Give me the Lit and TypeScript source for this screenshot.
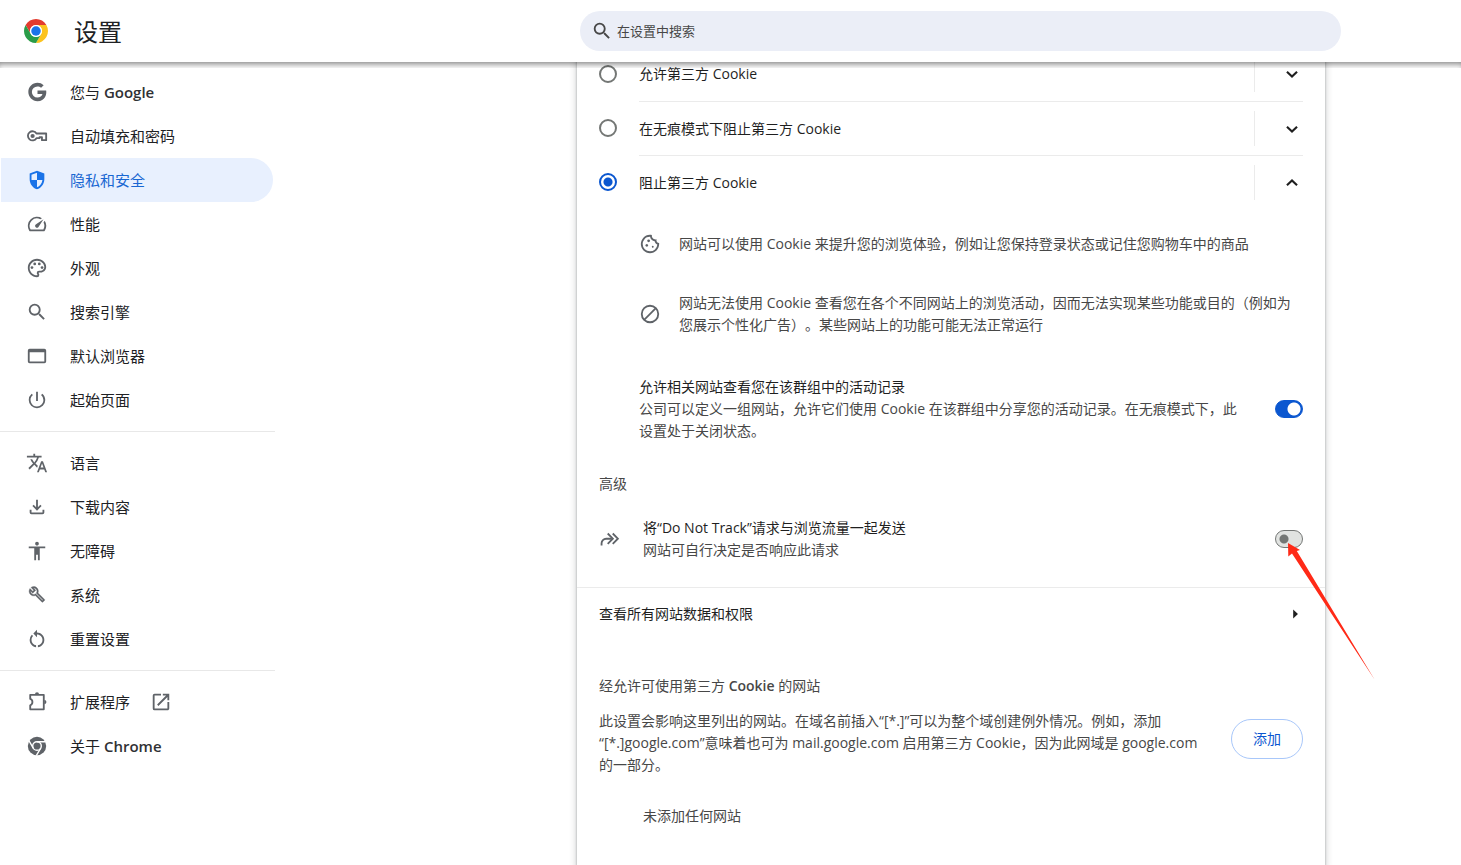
import { LitElement, html, css, svg, nothing } from "lit";
import { customElement, property } from "lit/decorators.js";
import { unsafeSVG } from "lit/directives/unsafe-svg.js";

const ICONS: Record<string, string> = {
  google: `<path d="M12.545 10.239v3.821h5.445c-.712 2.315-2.647 3.972-5.445 3.972a6.033 6.033 0 1 1 0-12.064c1.498 0 2.866.549 3.921 1.453l2.814-2.814A9.969 9.969 0 0 0 12.545 2C7.021 2 2.543 6.477 2.543 12s4.478 10 10.002 10c8.396 0 10.249-7.85 9.426-11.748z"/>`,
  key: `<g fill="none" stroke="currentColor" stroke-width="2"><path d="M11.400 9.300H22V16.500h-4.600V13.200h-2.600v1.200h-3.400A5 5 0 1 1 11.400 9.300z" stroke-linejoin="round"/></g><circle cx="7.200" cy="12" r="2.300"/>`,
  shield: `<path fill-rule="evenodd" d="M12 2 4 5v6.100C4 16.150 7.410 20.850 12 22c4.590-1.150 8-5.850 8-10.900V5l-8-3zM6 6.400l6-2.260V12H6.060A9 9 0 0 1 6 11.100V6.400zM12 12h5.940c-.46 3.600-2.840 6.870-5.940 7.920V12z"/>`,
  speed: `<path d="m20.380 8.570-1.230 1.850a8 8 0 0 1-.22 7.580H5.070A8 8 0 0 1 15.580 6.850l1.850-1.230A10 10 0 0 0 3.350 19a2 2 0 0 0 1.720 1h13.850a2 2 0 0 0 1.740-1 10 10 0 0 0-.27-10.440zm-9.790 6.840a2 2 0 0 0 2.830 0l5.660-8.490-8.490 5.660a2 2 0 0 0 0 2.830z"/>`,
  palette: `<path d="M12 22C6.490 22 2 17.510 2 12S6.490 2 12 2s10 4.040 10 9c0 3.310-2.690 6-6 6h-1.770c-.28 0-.5.22-.5.5 0 .12.05.23.13.33.41.47.64 1.060.64 1.670A2.500 2.500 0 0 1 12 22zm0-18c-4.410 0-8 3.590-8 8s3.590 8 8 8c.28 0 .5-.22.5-.5a.54.54 0 0 0-.14-.35c-.41-.46-.63-1.050-.63-1.650a2.500 2.500 0 0 1 2.500-2.500H16c2.210 0 4-1.790 4-4 0-3.860-3.590-7-8-7z"/><circle cx="6.500" cy="11.500" r="1.500"/><circle cx="9.500" cy="7.500" r="1.500"/><circle cx="14.500" cy="7.500" r="1.500"/><circle cx="17.500" cy="11.500" r="1.500"/>`,
  search: `<path d="M15.500 14h-.79l-.28-.27A6.471 6.471 0 0 0 16 9.500 6.500 6.500 0 1 0 9.500 16c1.610 0 3.090-.59 4.230-1.570l.27.28v.79l5 4.990L20.490 19l-4.990-5zm-6 0C7.010 14 5 11.990 5 9.500S7.010 5 9.500 5 14 7.010 14 9.500 11.990 14 9.500 14z"/>`,
  browser: `<path d="M20 4H4a2 2 0 0 0-2 2v12a2 2 0 0 0 2 2h16a2 2 0 0 0 2-2V6a2 2 0 0 0-2-2zm0 14H4V8h16v10z"/>`,
  power: `<path d="M13 3h-2v10h2V3zm4.830 2.170-1.420 1.420A6.920 6.920 0 0 1 19 12c0 3.870-3.130 7-7 7A6.995 6.995 0 0 1 7.580 6.580L6.170 5.170A8.932 8.932 0 0 0 3 12a9 9 0 0 0 18 0c0-2.740-1.230-5.180-3.170-6.830z"/>`,
  translate: `<path d="m12.870 15.070-2.540-2.510.03-.03A17.520 17.520 0 0 0 14.070 6H17V4h-7V2H8v2H1v1.990h11.170C11.500 7.920 10.440 9.750 9 11.350 8.070 10.320 7.300 9.190 6.690 8h-2c.73 1.630 1.730 3.170 2.980 4.560l-5.090 5.020L4 19l5-5 3.110 3.110.76-2.040zM18.500 10h-2L12 22h2l1.120-3h4.750L21 22h2l-4.500-12zm-2.620 7 1.620-4.330L19.120 17h-3.240z"/>`,
  download: `<path d="m12 16-5-5 1.400-1.450 2.600 2.600V4h2v8.150l2.600-2.600L17 11l-5 5zm-6 4a2 2 0 0 1-2-2v-3h2v3h12v-3h2v3a2 2 0 0 1-2 2H6z"/>`,
  accessibility: `<path d="M12 2c1.100 0 2 .9 2 2s-.9 2-2 2-2-.9-2-2 .9-2 2-2zm9 7h-6v13h-2v-6h-2v6H9V9H3V7h18v2z"/>`,
  wrench: `<g transform="translate(2.600 2) scale(.78)" stroke="currentColor" stroke-width=".5"><path d="m22.610 18.990-9.080-9.080c.93-2.340.45-5.100-1.440-7C9.790.61 6.210.4 3.660 2.260L7.500 6.110 6.080 7.520 2.250 3.690C.39 6.230.6 9.820 2.900 12.110c1.860 1.860 4.570 2.350 6.890 1.480l9.110 9.110c.39.39 1.020.39 1.410 0l2.300-2.300c.4-.38.4-1.010 0-1.410zm-3 1.600-9.460-9.460c-.61.45-1.290.72-2 .82-1.360.2-2.790-.21-3.830-1.250C3.370 9.760 2.930 8.500 3 7.260l3.090 3.090 4.240-4.240-3.090-3.090c1.240-.07 2.490.37 3.440 1.310 1.080 1.080 1.490 2.570 1.240 3.960-.12.71-.42 1.370-.88 1.960l9.450 9.450-.88.89z"/></g>`,
  reset: `<path d="M12 5V2L8 6l4 4V7c3.310 0 6 2.690 6 6 0 2.970-2.170 5.430-5 5.910v2.020c3.950-.49 7-3.850 7-7.930 0-4.420-3.580-8-8-8z"/><path d="M6 13c0-1.650.67-3.150 1.760-4.240L6.340 7.340A8.014 8.014 0 0 0 4 13c0 4.080 3.050 7.440 7 7.930v-2.020c-2.830-.48-5-2.940-5-5.910z"/>`,
  extension: `<path d="M4.600 4.200H19.400V20H4.600V15.600C7.800 14.600 7.800 9.600 4.600 8.700z" fill="none" stroke="currentColor" stroke-width="2" stroke-linejoin="round"/><path d="M9.800 3.600a2.200 2.200 0 0 1 4.400 0zM20 9.800a2.300 2.300 0 0 1 0 4.600z"/>`,
  open: `<path d="M19 19H5V5h7V3H5a2 2 0 0 0-2 2v14a2 2 0 0 0 2 2h14c1.100 0 2-.9 2-2v-7h-2v7zM14 3v2h3.590l-9.830 9.830 1.410 1.410L19 6.410V10h2V3h-7z"/>`,
  chrome: `<circle cx="12" cy="12" r="10"/><g fill="none" stroke="#fff" stroke-width="1.500"><circle cx="12" cy="12" r="4.700"/><path d="M12 7.300H21.500M16.100 14.300 11.200 22.600M7.900 14.300 3.200 6.200"/></g>`,
  cookie: `<g transform="translate(0 24) scale(.025)"><path d="M480-80q-83 0-156-31.500T197-197q-54-54-85.500-127T80-480q0-75 29-147t81-128.500q52-56.500 125-91T475-881q21 0 43 2t45 7q-9 45 6 85t45 66.500q30 26.500 71.500 36.500t85.500-5q-26 59 7.500 113t99.500 56q1 11 1.500 20.500t.5 20.500q0 82-31.500 154.500t-85.500 127q-54 54.500-127 86T480-80Zm-60-480q25 0 42.500-17.500T480-620q0-25-17.500-42.500T420-680q-25 0-42.500 17.500T360-620q0 25 17.500 42.500T420-560Zm-80 200q25 0 42.500-17.500T400-420q0-25-17.500-42.500T340-480q-25 0-42.500 17.500T280-420q0 25 17.500 42.500T340-360Zm260 40q17 0 28.500-11.500T640-360q0-17-11.500-28.500T600-400q-17 0-28.500 11.500T560-360q0 17 11.500 28.500T600-320ZM480-160q122 0 216.500-84T800-458q-50-22-78.500-60T683-603q-77-11-132-66t-68-132q-80-2-140.500 29t-101 79.500Q201-644 180.500-587T160-480q0 133 93.500 226.500T480-160Z"/></g>`,
  block: `<g fill="none" stroke="currentColor" stroke-width="2"><circle cx="12" cy="12" r="9"/><path d="M5.600 18.400 18.400 5.600"/></g>`,
  redirect: `<g fill="none" stroke="currentColor" stroke-width="2"><path d="M2.800 19v-2.300a5 5 0 0 1 5-5H14"/><path d="m9.500 6 5.600 5.700-5.600 5.700M15 6l5.600 5.700-5.600 5.700"/></g>`,
  down: `<path d="m6.500 9.500 5.500 5.300 5.500-5.300" fill="none" stroke="currentColor" stroke-width="2.300"/>`,
  up: `<path d="M6.500 14.500 12 9.200l5.500 5.300" fill="none" stroke="currentColor" stroke-width="2.300"/>`,
  right: `<path d="m10 7 5.200 5-5.200 5z"/>`,
};

@customElement("s-icon")
class SIcon extends LitElement {
  @property() name = "";

  static styles = css`
    :host { display: block; flex: none; width: 22px; height: 22px; }
    .glyph { display: block; width: 100%; height: 100%; fill: currentColor; }
  `;

  render() {
    return html`<svg class="glyph" viewBox="0 0 24 24" aria-hidden="true">${unsafeSVG(ICONS[this.name] ?? "")}</svg>`;
  }
}

const sector = (color: string, turn: number) => svg`
  <path fill=${color} transform=${`rotate(${turn})`}
    d="M-10.392-6A12 12 0 0 1 10.392-6H0A6 6 0 0 0-5.196 3z"></path>`;

@customElement("s-header")
class SHeader extends LitElement {
  static styles = css`
    :host { display: block; position: relative; z-index: 2; background: #fff; }
    .bar {
      display: grid;
      grid-template-columns: 275px minmax(0, 305fr) minmax(0, 761px) minmax(0, 120fr);
      align-items: center;
      height: 62px;
    }
    .brand { display: flex; align-items: center; gap: 26px; padding-left: 24px; }
    .logo { display: block; width: 24px; height: 24px; }
    .title { margin: 0; padding-top: 2px; font-size: 24px; line-height: 32px; font-weight: 400; color: #202124; }
    .search {
      grid-column: 3; display: flex; align-items: center; gap: 4px;
      height: 40px; padding: 0 22px 0 11px; box-sizing: border-box;
      border-radius: 20px; background: #ebeef7; color: #474747;
    }
    .field {
      flex: 1; min-width: 0; border: 0; padding: 0; outline: 0; background: none;
      font: inherit; font-size: 13px; line-height: 20px; color: #1f1f1f;
    }
    .field::placeholder { color: #474747; opacity: 1; }
    .shade {
      position: absolute; left: 0; right: 0; top: 100%; height: 6px;
      box-shadow: inset 0 5px 6px -3px rgba(0, 0, 0, 0.5); pointer-events: none;
    }
  `;

  render() {
    return html`
      <header class="bar">
        <div class="brand">
          <svg class="logo" viewBox="-12 -12 24 24" aria-hidden="true">
            ${sector("#e33b2e", 0)}${sector("#fcc31e", 120)}${sector("#2a9c48", 240)}
            <circle r="6" fill="#fff"></circle>
            <circle r="4.75" fill="#1a73e8"></circle>
          </svg>
          <h1 class="title">设置</h1>
        </div>
        <label class="search">
          <s-icon name="search"></s-icon>
          <input class="field" type="text" placeholder="在设置中搜索" aria-label="在设置中搜索" />
        </label>
      </header>
      <div class="shade"></div>
    `;
  }
}

interface NavItem { icon: string; text: string; latin?: string; selected?: boolean; external?: boolean }

const NAV: NavItem[][] = [
  [
    { icon: "google", text: "您与", latin: "Google" },
    { icon: "key", text: "自动填充和密码" },
    { icon: "shield", text: "隐私和安全", selected: true },
    { icon: "speed", text: "性能" },
    { icon: "palette", text: "外观" },
    { icon: "search", text: "搜索引擎" },
    { icon: "browser", text: "默认浏览器" },
    { icon: "power", text: "起始页面" },
  ],
  [
    { icon: "translate", text: "语言" },
    { icon: "download", text: "下载内容" },
    { icon: "accessibility", text: "无障碍" },
    { icon: "wrench", text: "系统" },
    { icon: "reset", text: "重置设置" },
  ],
  [
    { icon: "extension", text: "扩展程序", external: true },
    { icon: "chrome", text: "关于", latin: "Chrome" },
  ],
];

@customElement("s-nav")
class SNav extends LitElement {
  static styles = css`
    :host { display: block; padding-top: 8px; }
    .group + .group { border-top: 1px solid #e8e8e8; margin-top: 9px; padding-top: 9px; }
    .item {
      display: flex; align-items: center; gap: 22px; height: 44px;
      margin: 0 2px 0 1px; padding: 0 25px; box-sizing: border-box;
      border-radius: 0 22px 22px 0;
      font-size: 15px; line-height: 22px; color: #202124; text-decoration: none;
    }
    .selected { background: #e8f0fe; color: #1967d2; }
    .icon { color: #5f6368; }
    .selected .icon { color: #1a73e8; }
    .latin { font-weight: 600; color: #303134; }
    .external { margin-left: -2px; color: #5f6368; }
  `;

  render() {
    return html`<nav>
      ${NAV.map((group) => html`<div class="group">
        ${group.map((item) => html`
          <a class="item ${item.selected ? "selected" : ""}" href="#">
            <s-icon class="icon" name=${item.icon}></s-icon>
            <span>${item.text}${item.latin ? html` <span class="latin">${item.latin}</span>` : nothing}</span>
            ${item.external ? html`<s-icon class="external" name="open"></s-icon>` : nothing}
          </a>`)}
      </div>`)}
    </nav>`;
  }
}

const CHOICES = [
  { id: "allow", text: "允许第三方 Cookie", open: false },
  { id: "incognito", text: "在无痕模式下阻止第三方 Cookie", open: false },
  { id: "block", text: "阻止第三方 Cookie", open: true },
];

@customElement("s-cookies")
class SCookies extends LitElement {
  static styles = css`
    :host {
      display: block; position: relative; margin-top: -15px; padding-bottom: 36px; background: #fff;
      box-shadow: 0 1px 2px rgba(60, 64, 67, 0.4), 0 2px 6px 2px rgba(60, 64, 67, 0.18);
      font-size: 14px; line-height: 22px; color: #1f1f1f;
    }
    .choices { margin: 0; padding: 0 22px; border: 0; min-width: 0; }
    .choice { display: flex; align-items: center; gap: 22px; }
    .radio {
      appearance: none; flex: none; width: 18px; height: 18px; margin: 0; box-sizing: border-box;
      border: 2px solid #747775; border-radius: 50%; background: #fff;
    }
    .radio:checked { border-color: #0b57d0; background: radial-gradient(circle, #0b57d0 4px, #fff 5px); }
    .choice-body { flex: 1; display: flex; align-items: center; height: 54px; box-sizing: border-box; }
    .choice + .choice .choice-body { border-top: 1px solid #ebebeb; }
    .choice-text { flex: 1; }
    .expand {
      display: flex; align-items: center; justify-content: flex-end;
      width: 49px; height: 35px; padding: 0; border: 0; border-left: 1px solid #ebebeb;
      background: none; color: #1f1f1f;
    }
    .details { display: flex; flex-direction: column; gap: 37px; padding: 24px 22px 40px 62px; }
    .detail { display: flex; align-items: center; gap: 18px; color: #474747; }
    .text { text-spacing-trim: space-all; margin: 0; color: #474747; }
    .row { display: flex; align-items: center; gap: 22px; padding: 0 22px; }
    .related { padding-left: 62px; }
    .grow { flex: 1; min-width: 0; }
    .label { display: block; }
    .icon { color: #5f6368; }
    .switch {
      appearance: none; display: block; width: 28px; height: 18px; margin: 0; box-sizing: border-box;
      border: 1px solid #747775; border-radius: 9px;
      background: radial-gradient(circle at 8px 50%, #747775 4px, #e1e3e1 5px);
    }
    .switch:checked { border-color: #0b57d0; background: radial-gradient(circle at 18px 50%, #fff 6px, #0b57d0 7px); }
    .switch-box { position: relative; flex: none; }
    .pointer { position: absolute; left: 11px; top: 12px; z-index: 1; width: 90px; height: 140px; pointer-events: none; }
    .heading { margin: 0; padding: 31px 22px 22px; font-size: 14px; font-weight: 400; color: #474747; }
    .track { padding-bottom: 26px; border-bottom: 1px solid #ebebeb; }
    .link { justify-content: space-between; height: 52px; color: inherit; text-decoration: none; }
    .chevron { margin-right: -3px; }
    .allowed { padding-top: 35px; padding-bottom: 13px; }
    .strong { font-weight: 600; }
    .add {
      flex: none; height: 40px; margin-bottom: 8px; padding: 0 21px; border: 1px solid #a8c7fa; border-radius: 20px;
      background: #fff; font: inherit; line-height: 22px; color: #0b57d0;
    }
    .empty { margin: 0; padding: 29px 22px 0 66px; color: #474747; }
  `;

  render() {
    return html`
      <fieldset class="choices" aria-label="第三方 Cookie">
        ${CHOICES.map((c) => html`
          <div class="choice">
            <input class="radio" type="radio" name="cookies" id=${c.id} ?checked=${c.open} />
            <div class="choice-body">
              <label class="choice-text" for=${c.id}>${c.text}</label>
              <button class="expand" type="button" aria-expanded=${c.open} aria-label=${c.text}>
                <s-icon name=${c.open ? "up" : "down"}></s-icon>
              </button>
            </div>
          </div>`)}
      </fieldset>

      <div class="details">
        <div class="detail">
          <s-icon class="icon" name="cookie"></s-icon>
          <p class="text">网站可以使用 Cookie 来提升您的浏览体验，例如让您保持登录状态或记住您购物车中的商品</p>
        </div>
        <div class="detail">
          <s-icon class="icon" name="block"></s-icon>
          <p class="text">网站无法使用 Cookie 查看您在各个不同网站上的浏览活动，因而无法实现某些功能或目的（例如为<br />您展示个性化广告）。某些网站上的功能可能无法正常运行</p>
        </div>
      </div>

      <div class="row related">
        <div class="grow">
          <label class="label" for="related">允许相关网站查看您在该群组中的活动记录</label>
          <p class="text">公司可以定义一组网站，允许它们使用 Cookie 在该群组中分享您的活动记录。在无痕模式下，此<br />设置处于关闭状态。</p>
        </div>
        <input class="switch" type="checkbox" role="switch" id="related" checked />
      </div>

      <h2 class="heading">高级</h2>

      <div class="row track">
        <s-icon class="icon" name="redirect"></s-icon>
        <div class="grow">
          <label class="label" for="dnt">将“Do Not Track”请求与浏览流量一起发送</label>
          <p class="text">网站可自行决定是否响应此请求</p>
        </div>
        <div class="switch-box">
          <input class="switch" type="checkbox" role="switch" id="dnt" />
          <svg class="pointer" viewBox="0 0 90 140" aria-hidden="true">
            <path fill="#ff2a17" d="M2 1 14 8 10.800 9 88.700 137.700 6 11.500 2.300 14.500z"></path>
          </svg>
        </div>
      </div>

      <a class="row link" href="#">
        <span>查看所有网站数据和权限</span>
        <s-icon class="chevron" name="right"></s-icon>
      </a>

      <h2 class="heading allowed">经允许可使用第三方 <span class="strong">Cookie</span> 的网站</h2>
      <div class="row">
        <p class="text grow">此设置会影响这里列出的网站。在域名前插入“[*.]”可以为整个域创建例外情况。例如，添加<br />“[*.]google.com”意味着也可为 mail.google.com 启用第三方 Cookie，因为此网域是 google.com<br />的一部分。</p>
        <button class="add" type="button">添加</button>
      </div>
      <p class="empty">未添加任何网站</p>
    `;
  }
}

@customElement("app-root")
class AppRoot extends LitElement {
  static styles = css`
    :host {
      display: flex; flex-direction: column; min-height: 100vh; background: #fff;
      font-family: "Open Sans", "Noto Sans", "Noto Sans CJK SC", sans-serif;
    }
    .page {
      flex: 1; display: grid; overflow: hidden;
      grid-template-columns: 275px minmax(0, 302fr) minmax(0, 748px) minmax(0, 136fr);
    }
    .card { grid-column: 3; }
  `;

  render() {
    return html`
      <s-header></s-header>
      <main class="page" lang="zh-CN">
        <s-nav></s-nav>
        <s-cookies class="card"></s-cookies>
      </main>
    `;
  }
}
